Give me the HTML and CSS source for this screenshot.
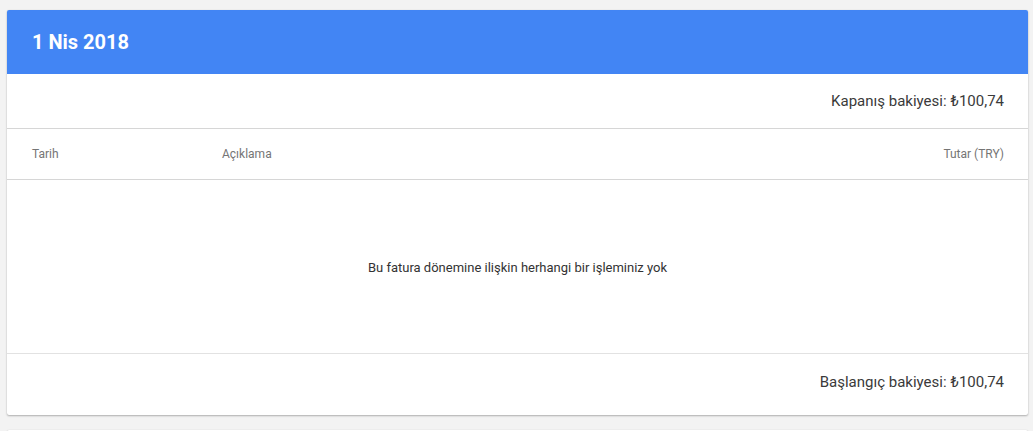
FILE: index.html
```html
<!DOCTYPE html>
<html lang="tr">
<head>
<meta charset="utf-8">
<title>Fatura dönemi</title>
<link rel="stylesheet" href="styles.css">
</head>
<body>
  <section class="statement">
    <header class="statement-head">1 Nis 2018</header>
    <div class="balance balance-closing">Kapanış bakiyesi: <span class="cur">₺</span>100,74</div>
    <div class="columns">
      <span class="col col-date">Tarih</span>
      <span class="col col-desc">Açıklama</span>
      <span class="col col-amount">Tutar (TRY)</span>
    </div>
    <div class="empty">Bu fatura dönemine ilişkin herhangi bir işleminiz yok</div>
    <div class="balance balance-opening">Başlangıç bakiyesi: <span class="cur">₺</span>100,74</div>
  </section>
  <section class="statement next"></section>
</body>
</html>
```
FILE: styles.css
```css
html, body {
  margin: 0;
  background: #f3f3f3;
}
body {
  padding: 10px 5px 0 7px;
  font-family: Roboto, "Noto Sans", Arial, sans-serif;
  color: #333;
}
.statement {
  background: #fff;
  box-shadow: 0 1px 2px rgba(0, 0, 0, 0.28), 0 0 1px rgba(0, 0, 0, 0.12);
  border-radius: 2px;
}
.statement-head {
  height: 64px;
  display: flex;
  align-items: center;
  padding: 0 24px 0 25px;
  background: #4285f4;
  color: #fff;
  font-size: 20px;
  font-weight: 700;
  border-radius: 2px 2px 0 0;
}
.balance {
  display: flex;
  justify-content: flex-end;
  align-items: center;
  padding: 0 24px;
  font-size: 15px;
  color: #3a3a3a;
}
.balance-closing {
  height: 54px;
  border-bottom: 1px solid #d6d6d6;
}
.balance-opening {
  height: 61px;
  padding-bottom: 6px;
  box-sizing: border-box;
}
.cur {
  margin-left: 4px;
}
.columns {
  height: 50px;
  display: flex;
  align-items: center;
  padding: 0 24px 0 25px;
  font-size: 12px;
  color: #757575;
  border-bottom: 1px solid #d6d6d6;
}
.col-date {
  width: 190px;
}
.col-desc {
  flex: 1;
}
.col-amount {
  text-align: right;
}
.empty {
  height: 174px;
  display: flex;
  align-items: center;
  justify-content: center;
  padding-top: 2px;
  box-sizing: border-box;
  font-size: 13px;
  color: #333;
  border-bottom: 1px solid #e2e2e2;
}
.next {
  margin-top: 15px;
  height: 20px;
}
```
